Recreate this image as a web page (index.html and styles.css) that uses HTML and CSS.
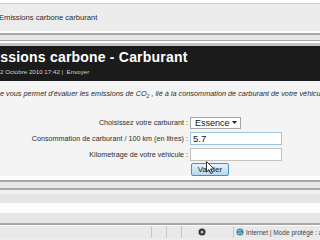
FILE: index.html
```html
<!DOCTYPE html>
<html lang="fr">
<head>
    <meta charset="UTF-8">
    <title>Emissions carbone carburant</title>
    <link rel="stylesheet" href="styles.css">
</head>
<body>
    <!-- Browser tab strip -->
    <div class="chrome-top">
        <div class="band white h3"></div>
        <div class="band grey-line h1"></div>
        <div class="tab-title">Emissions carbone carburant</div>
        <div class="band white h2"></div>
        <div class="band dark-line h2"></div>
        <div class="band light h5"></div>
        <div class="band dark-line h1"></div>
        <div class="band white h2"></div>
        <div class="band mid h3"></div>
    </div>

    <!-- Article header -->
    <div class="page-head">
        <h1 class="page-title">Emissions carbone - Carburant</h1>
        <div class="page-meta">2 Octobre 2010 17:42 | &nbsp;Envoyer</div>
    </div>

    <!-- Calculator -->
    <div class="content">
        <p class="intro">e vous permet d'évaluer les emissions de CO<sub>2</sub> , lié à la consommation de carburant de votre véhicule</p>

        <form class="calc">
            <div class="row r1">
                <label class="lbl">Choisissez votre carburant :</label>
                <div class="fake-select">
                    <span>Essence</span>
                    <svg class="arrow" width="5" height="3" viewBox="0 0 5 3"><path d="M0 0h5L2.5 3z" fill="#222"/></svg>
                </div>
            </div>
            <div class="row">
                <label class="lbl">Consommation de carburant / 100 km (en litres) :</label>
                <input class="field focus" type="text" value="5.7">
            </div>
            <div class="row">
                <label class="lbl">Kilometrage de votre véhicule :</label>
                <input class="field" type="text" value="">
            </div>
            <div class="row btn-row">
                <span class="lbl"></span>
                <button class="btn" type="button">Valider</button>
            </div>
        </form>

        <!-- mouse pointer over the button -->
        <svg class="cursor" width="9" height="13" viewBox="0 0 9 13">
            <path d="M0.5 0.5v10.5l2.5-2.4 1.8 4 1.6-0.7-1.8-3.9h3.4z" fill="#fff" stroke="#222" stroke-width="0.9"/>
        </svg>
    </div>

    <!-- Browser bottom chrome -->
    <div class="chrome-bottom">
        <div class="band white h4"></div>
        <div class="band dark-line h2"></div>
        <div class="band light h6"></div>
        <div class="band dark-line h2"></div>
        <div class="band lighter h4"></div>
        <div class="band light h9"></div>
        <div class="band white h10"></div>
        <div class="band light h10"></div>
        <div class="band dark-line h2"></div>
        <div class="band white h1"></div>
    </div>

    <div class="status">
        <div class="cell grow"></div>
        <div class="cell w14"></div>
        <div class="cell w14"></div>
        <div class="cell icon-cell">
            <svg width="8" height="8" viewBox="0 0 8 8"><circle cx="4" cy="4" r="3.5" fill="#333"/><circle cx="4" cy="4" r="1.5" fill="#bbb"/></svg>
        </div>
        <div class="cell zone">
            <svg width="8" height="8" viewBox="0 0 8 8"><circle cx="4" cy="4" r="3.6" fill="#3e8fa8"/><path d="M2 3c1-1 2 0 3-1M2 5.5c1.5 0 2.5-1 4 0" stroke="#cde" stroke-width="0.8" fill="none"/></svg>
            <span>Internet | Mode protégé : activé</span>
        </div>
    </div>
</body>
</html>
```

FILE: styles.css
```css
/* Whole window */
body {
    margin: 0;
    width: 320px;
    height: 240px;
    overflow: hidden;
    background-color: #ececec;
    font-family: "Liberation Sans", Arial, sans-serif;
    color: #222;
}

/* Thin horizontal chrome stripes */
.band { width: 100%; }
.white { background-color: #fdfdfd; }
.grey-line { background-color: #c9c9c9; }
.dark-line { background-color: #a7a7a7; }
.light { background-color: #e6e6e6; }
.lighter { background-color: #f1f1f1; }
.mid { background-color: #c4c4c4; }
.h1 { height: 1px; }
.h2 { height: 2px; }
.h3 { height: 3px; }
.h4 { height: 4px; }
.h5 { height: 5px; }
.h6 { height: 6px; }
.h9 { height: 9px; }
.h10 { height: 10px; }

.tab-title {
    height: 27px;
    line-height: 27px;
    background-color: #ececec;
    font-size: 7.6px;
    color: #2a2a2a;
    text-indent: -1px;
    white-space: nowrap;
}

/* Dark article header */
.page-head {
    height: 35px;
    background-color: #1b1b1b;
    overflow: hidden;
    white-space: nowrap;
}

.page-title {
    margin: 0 0 0 -26px;
    padding-top: 3px;
    font-size: 14px;
    line-height: 16px;
    font-weight: bold;
    color: #fff;
    letter-spacing: 0.2px;
}

.page-meta {
    margin-top: 3px;
    font-size: 6.2px;
    line-height: 8px;
    color: #d0d0d0;
}

/* Calculator area */
.content {
    position: relative;
    height: 95px;
    background-color: #f4f4f4;
    overflow: hidden;
}

.intro {
    margin: 0;
    padding-top: 8px;
    font-size: 7.3px;
    line-height: 10px;
    font-style: italic;
    white-space: nowrap;
    color: #2b2b2b;
}

.intro sub {
    font-size: 5px;
}

.calc {
    margin-top: 14px;
}

.row {
    display: flex;
    align-items: center;
    height: 16px;
}

.row.r1 { height: 15px; }

.lbl {
    width: 190px;
    padding-right: 2px;
    box-sizing: border-box;
    text-align: right;
    font-size: 7.2px;
    color: #2b2b2b;
    white-space: nowrap;
}

.fake-select {
    display: flex;
    align-items: center;
    justify-content: space-between;
    width: 51px;
    height: 12px;
    box-sizing: border-box;
    padding: 0 3px 0 4px;
    background-color: #fff;
    border: 1px solid #a5a5a5;
    font-size: 9px;
    color: #111;
}

.field {
    width: 92px;
    height: 13px;
    box-sizing: border-box;
    margin: 0;
    padding: 0 2px;
    border: 1px solid #c3c3c3;
    background-color: #fff;
    font-family: "Liberation Sans", Arial, sans-serif;
    font-size: 9.5px;
    color: #111;
}

.field.focus {
    border-color: #9fc3e3;
}

.btn-row { height: 15px; }

.btn {
    width: 38px;
    height: 13px;
    margin-left: 1px;
    padding: 0;
    border: 1px solid #4f8fbf;
    border-radius: 2px;
    background: linear-gradient(#e6f2fb, #b4d7f1);
    font-family: "Liberation Sans", Arial, sans-serif;
    font-size: 8px;
    color: #1a1a1a;
}

.cursor {
    position: absolute;
    left: 206px;
    top: 80px;
}

/* Status bar */
.status {
    display: flex;
    height: 12px;
    background-color: #e9e9e9;
    font-size: 6.5px;
    color: #444;
    overflow: hidden;
}

.cell {
    display: flex;
    align-items: center;
    flex-shrink: 0;
    border-right: 1px solid #c6c6c6;
    padding: 0 2px;
}

.grow { width: 147px; }
.w14 { width: 10px; }
.icon-cell { width: 52px; padding-left: 16px; box-sizing: border-box; }

.zone {
    gap: 2px;
    border-right: none;
    white-space: nowrap;
}
```
